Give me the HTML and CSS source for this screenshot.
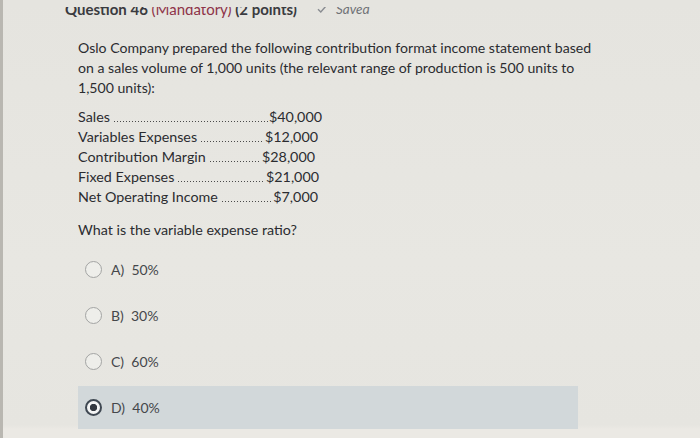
FILE: index.html
```html
<!DOCTYPE html>
<html lang="en">
<head>
<meta charset="utf-8">
<title>Question 46</title>
<link rel="stylesheet" href="styles.css">
</head>
<body>
<div class="edge"></div>
<div class="topcover"></div>
<main class="page">
  <header class="qhead">
    <span class="qtitle">Question 46 <span class="mand">(Mandatory)</span> (2 points)</span>
    <span class="saved">
      <svg class="check" width="10" height="8" viewBox="0 0 10 8"><path d="M1 4.2 L3.8 7 L9 1" fill="none" stroke="#8a8d92" stroke-width="1.4"/></svg>
      <span class="saved-text">Saved</span>
    </span>
  </header>

  <p class="intro">Oslo Company prepared the following contribution format income statement based on a sales volume of 1,000 units (the relevant range of production is 500 units to 1,500 units):</p>

  <div class="statement">
    <div class="row"><span class="lbl">Sales</span><span class="dots"></span><span class="val">$40,000</span></div>
    <div class="row r2"><span class="lbl">Variables Expenses</span><span class="dots"></span><span class="val">$12,000</span></div>
    <div class="row r3"><span class="lbl">Contribution Margin</span><span class="dots"></span><span class="val">$28,000</span></div>
    <div class="row r4"><span class="lbl">Fixed Expenses</span><span class="dots"></span><span class="val">$21,000</span></div>
    <div class="row r5"><span class="lbl">Net Operating Income</span><span class="dots"></span><span class="val">$7,000</span></div>
  </div>

  <p class="question">What is the variable expense ratio?</p>

  <div class="options">
    <div class="option"><span class="radio"></span><span class="otext">A)&nbsp; 50%</span></div>
    <div class="option"><span class="radio"></span><span class="otext">B)&nbsp; 30%</span></div>
    <div class="option"><span class="radio"></span><span class="otext">C)&nbsp; 60%</span></div>
    <div class="option selected"><span class="radio on"></span><span class="otext">D)&nbsp; 40%</span></div>
  </div>
</main>
</body>
</html>
```

FILE: styles.css
```css
* { box-sizing: border-box; }
html, body {
  margin: 0;
  padding: 0;
  height: 100%;
  overflow: hidden;
}
body {
  background: linear-gradient(180deg, #e5e4df 0%, #e8e7e2 60%, #e6e5e0 97%, #ebe9e4 98%);
  font-family: Lato, "Noto Sans", sans-serif;
  color: #2f3033;
  position: relative;
}
.edge {
  position: absolute;
  left: 0; top: 0; bottom: 0;
  width: 3px;
  background: #b9b7b1;
}
.topcover {
  position: absolute;
  left: 3px; right: 0; top: 0;
  height: 7px;
  background: #e5e4df;
}
.page {
  padding-left: 78px;
}
.qhead {
  display: flex;
  align-items: center;
  height: 20px;
  margin-top: -1px;
  margin-left: -13px;
  font-size: 15px;
  font-weight: 700;
  color: #3a3b40;
}
.mand { color: #8e3348; font-weight: 400; }
.saved {
  display: flex;
  align-items: center;
  margin-left: 20px;
  font-weight: 400;
  color: #6f7176;
  font-size: 13.5px;
}
.check { margin-right: 9px; }
.saved-text { font-style: italic; }

.intro {
  margin: 19px 0 0 0;
  width: 520px;
  font-size: 14.1px;
  line-height: 20px;
  color: #2b2c30;
}
.statement {
  margin-top: 9px;
  width: 244px;
  font-size: 14.3px;
  line-height: 20px;
  color: #2b2c30;
}
.row {
  display: flex;
  align-items: center;
  height: 20px;
}
.lbl, .val { flex: none; white-space: nowrap; }
.dots {
  flex: 1;
  align-self: stretch;
  margin: 0 1px 0 4px;
  background-image: linear-gradient(to right, #4a4a4a 1px, transparent 1px);
  background-size: 3px 1px;
  background-position: 0 14px;
  background-repeat: repeat-x;
}
.r2 .val { margin-right: 4px; }
.r3 .val { margin-right: 7px; }
.r4 .val { margin-right: 3px; }
.r5 .val { margin-right: 4px; }

.question {
  margin: 13px 0 0 0;
  font-size: 14.3px;
  line-height: 20px;
  color: #2b2c30;
}
.options {
  margin-top: 8px;
  display: flex;
  flex-direction: column;
  gap: 3px;
  width: 500px;
}
.option {
  height: 43px;
  display: flex;
  align-items: center;
  padding-left: 7px;
}
.option.selected {
  background: #d2d8da;
}
.radio {
  width: 17px;
  height: 17px;
  border-radius: 50%;
  border: 1.5px solid #a3a4a3;
  background: #eeeeea;
  flex: none;
}
.radio.on {
  border: 2px solid #3f4852;
  background: radial-gradient(circle, #333840 0 3.4px, #f3f4f4 3.9px);
}
.otext {
  margin-left: 9px;
  font-size: 14px;
  color: #45474b;
}
```
